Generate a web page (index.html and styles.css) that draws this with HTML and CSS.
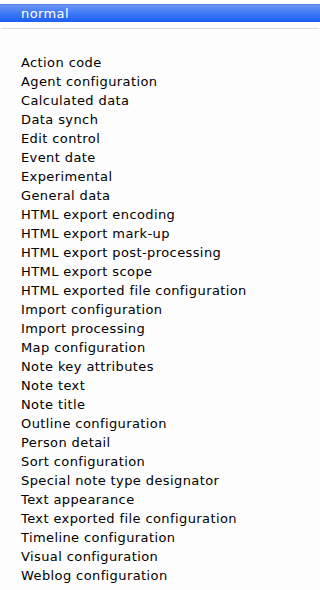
FILE: index.html
```html
<!DOCTYPE html>
<html>
<head>
<meta charset="utf-8">
<link rel="stylesheet" href="styles.css">
</head>
<body>
<div class="menu">
  <div class="selected">normal</div>
  <div class="sep"></div>
  <ul class="items">
    <li>Action code</li>
    <li>Agent configuration</li>
    <li>Calculated data</li>
    <li>Data synch</li>
    <li>Edit control</li>
    <li>Event date</li>
    <li>Experimental</li>
    <li>General data</li>
    <li>HTML export encoding</li>
    <li>HTML export mark-up</li>
    <li>HTML export post-processing</li>
    <li>HTML export scope</li>
    <li>HTML exported file configuration</li>
    <li>Import configuration</li>
    <li>Import processing</li>
    <li>Map configuration</li>
    <li>Note key attributes</li>
    <li>Note text</li>
    <li>Note title</li>
    <li>Outline configuration</li>
    <li>Person detail</li>
    <li>Sort configuration</li>
    <li>Special note type designator</li>
    <li>Text appearance</li>
    <li>Text exported file configuration</li>
    <li>Timeline configuration</li>
    <li>Visual configuration</li>
    <li>Weblog configuration</li>
  </ul>
</div>
</body>
</html>
```
FILE: styles.css
```css
html, body {
  margin: 0;
  padding: 0;
  background: #fdfdfd;
}
.menu {
  height: 590px;
  box-sizing: border-box;
  background: #fdfdfd;
  padding-top: 4px;
  font-family: "DejaVu Sans", "Liberation Sans", sans-serif;
  font-size: 13px;
  letter-spacing: 0.4px;
  color: #000;
  overflow: hidden;
}
.selected {
  height: 18px;
  line-height: 18px;
  padding-left: 21px;
  color: #fff;
  font-size: 13px;
  background: linear-gradient(#6b96f6, #3f78f4 50%, #1a5ef2);
  border-top: 1px solid #5b86ee;
  box-sizing: border-box;
}
.sep {
  height: 1px;
  background: #d9d9d9;
  margin: 6px 1px 0 1px;
}
.items {
  list-style: none;
  margin: 24px 0 0 0;
  padding: 0 0 0 21px;
}
.items li {
  height: 19px;
  line-height: 19px;
  white-space: nowrap;
}
```
